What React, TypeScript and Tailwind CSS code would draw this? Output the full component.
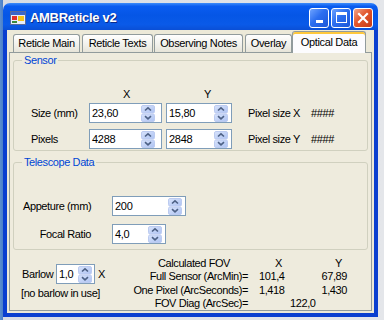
import React from "react";

const font = { fontFamily: '"Liberation Sans", Arial, sans-serif' };

function Spin() {
  return (
    <svg width="14" height="17" viewBox="0 0 14 17" className="shrink-0">
      <defs>
        <linearGradient id="sg" x1="0" y1="0" x2="1" y2="1">
          <stop offset="0" stopColor="#d8e3fb" />
          <stop offset="1" stopColor="#aec3f2" />
        </linearGradient>
      </defs>
      <rect x="0.5" y="0.5" width="13" height="7.5" rx="1.5" fill="url(#sg)" stroke="#bccbf0" />
      <rect x="0.5" y="9" width="13" height="7.5" rx="1.5" fill="url(#sg)" stroke="#bccbf0" />
      <path d="M4 5.5 L7 2.8 L10 5.5" fill="none" stroke="#4d6185" strokeWidth="1.6" />
      <path d="M4 11.2 L7 13.9 L10 11.2" fill="none" stroke="#4d6185" strokeWidth="1.6" />
    </svg>
  );
}

function NumInput({ value, w, mr = 3 }: { value: string; w: number; mr?: number }) {
  return (
    <div
      className="flex h-[20px] items-center justify-between border border-[#7f9db9] bg-white pl-[2px]"
      style={{ width: w, paddingRight: mr }}
    >
      <span className="text-[11px] tracking-[-0.3px] text-black">{value}</span>
      <Spin />
    </div>
  );
}

function Tab({ label, w, ml, selected }: { label: string; w: number; ml: number; selected?: boolean }) {
  return (
    <div
      className={
        selected
          ? "relative z-10 -mb-px flex h-[22px] items-end justify-center rounded-t-[3px] border border-b-0 border-[#919b9c] bg-[#fcfcfe] pb-[3px] shadow-[inset_0_2px_0_#ffc83c]"
          : "flex h-[18px] items-center justify-center rounded-t-[3px] border border-b-0 border-[#919b9c] bg-[linear-gradient(to_bottom,#ffffff,#f0f0ea_60%,#e6e4d8)]"
      }
      style={{ width: w, marginLeft: ml }}
    >
      <span className="text-[11px] tracking-[-0.35px] text-black">{label}</span>
    </div>
  );
}

function TitleButton({ kind }: { kind: "min" | "max" | "close" }) {
  const close = kind === "close";
  return (
    <div
      className={
        "flex h-[20px] w-[20px] items-center justify-center rounded-[3px] border border-white " +
        (close
          ? "bg-[linear-gradient(135deg,#f0a58a,#e2562c_45%,#c63a16)]"
          : "bg-[linear-gradient(135deg,#6ea3ff,#2b6ef0_45%,#1c57d8)]")
      }
    >
      {kind === "min" && <div className="mt-[8px] h-[3px] w-[7px] bg-white" />}
      {kind === "max" && <div className="h-[11px] w-[11px] border-[1px] border-t-[3px] border-white" />}
      {kind === "close" && (
        <svg width="12" height="12" viewBox="0 0 12 12">
          <path d="M2 2 L10 10 M10 2 L2 10" stroke="white" strokeWidth="2.2" strokeLinecap="square" />
        </svg>
      )}
    </div>
  );
}

function AppIcon() {
  return (
    <svg width="16" height="14" viewBox="0 0 16 14">
      <rect x="0.5" y="0.5" width="15" height="13" fill="#e8eefc" stroke="#5a6a9a" />
      <rect x="1" y="1" width="14" height="3" fill="#3a66c8" />
      <rect x="2" y="5" width="5" height="4" fill="#e0302a" />
      <rect x="8" y="5" width="6" height="5" fill="#f5c518" />
      <rect x="2" y="10" width="5" height="2" fill="#3c8a3c" />
    </svg>
  );
}

export default function App() {
  return (
    <div
      className="h-[320px] w-[384px] overflow-hidden bg-[linear-gradient(to_right,#5a8fd0_0px,#4b7fc8_3px,#d8dce4_3px,#e4e6ea_100%)] pl-[3px] pt-[3px]"
      style={font}
    >
      <div className="flex h-[312px] w-[375px] flex-col">
        {/* Title bar */}
        <div className="flex h-[27px] shrink-0 items-center rounded-t-[7px] bg-[linear-gradient(to_bottom,#3d8cfa_0%,#0a5cf0_12%,#0556e6_45%,#0a5ae8_80%,#0a4fd6_100%)] pl-[7px] pr-[5px] pt-[2px]">
          <AppIcon />
          <span className="ml-[4px] text-[13px] font-bold tracking-[-0.3px] text-white [text-shadow:1px_1px_0_#0a2a8a]">
            AMBReticle v2
          </span>
          <div className="ml-auto flex gap-[2px]">
            <TitleButton kind="min" />
            <TitleButton kind="max" />
            <TitleButton kind="close" />
          </div>
        </div>
        {/* Body */}
        <div className="flex flex-1 flex-col border-x-4 border-b-4 border-[#0a3fd0] bg-[#ece9d8] pb-[2px]">
          {/* Tabs */}
          <div className="flex h-[22px] shrink-0 items-end">
            <Tab label="Reticle Main" w={67} ml={6} />
            <Tab label="Reticle Texts" w={71} ml={2} />
            <Tab label="Observing Notes" w={89} ml={1} />
            <Tab label="Overlay" w={47} ml={2} />
            <Tab label="Optical Data" w={74} ml={0} selected />
          </div>
          {/* Panel */}
          <div className="mx-[2px] flex flex-1 flex-col border border-[#919b9c] bg-[#eeebdd] px-[3px] text-[11px] tracking-[-0.4px] text-black">
            {/* Sensor */}
            <fieldset className="mt-[1px] h-[97px] rounded-[3px] border border-[#d0d0bf] px-[8px]">
              <legend className="px-[2px] leading-[13px] text-[#0046d5]">Sensor</legend>
              <div className="mt-[21px] flex h-[12px] items-center leading-[12px]">
                <span className="ml-[101px]">X</span>
                <span className="ml-[74px]">Y</span>
              </div>
              <div className="mt-[3px] flex items-center">
                <span className="ml-[9px] w-[58px]">Size (mm)</span>
                <NumInput value="23,60" w={73} mr={6} />
                <div className="w-[4px]" />
                <NumInput value="15,80" w={66} />
                <span className="ml-[16px] w-[63px]">Pixel size X</span>
                <span>####</span>
              </div>
              <div className="mt-[6px] flex items-center">
                <span className="ml-[9px] w-[58px]">Pixels</span>
                <NumInput value="4288" w={73} mr={6} />
                <div className="w-[4px]" />
                <NumInput value="2848" w={66} />
                <span className="ml-[16px] w-[63px]">Pixel size Y</span>
                <span>####</span>
              </div>
            </fieldset>
            {/* Telescope */}
            <fieldset className="mt-[5px] h-[94px] rounded-[3px] border border-[#d0d0bf] px-[8px]">
              <legend className="px-[2px] leading-[13px] text-[#0046d5]">Telescope Data</legend>
              <div className="mt-[27px] flex items-center">
                <span className="ml-[1px] w-[89px]">Appeture (mm)</span>
                <NumInput value="200" w={74} />
              </div>
              <div className="mt-[8px] flex items-center">
                <span className="w-[69px] text-right">Focal Ratio</span>
                <div className="w-[21px]" />
                <NumInput value="4,0" w={54} />
              </div>
            </fieldset>
            {/* Bottom */}
            <div className="flex">
              <div className="flex w-[118px] flex-col pt-[14px]">
                <div className="flex items-center">
                  <span className="ml-[9px] w-[34px]">Barlow</span>
                  <NumInput value="1,0" w={39} mr={2} />
                  <span className="ml-[3px]">X</span>
                </div>
                <span className="ml-[8px] mt-[3px] leading-[13px]">[no barlow in use]</span>
              </div>
              <div className="flex flex-col pt-[7px] leading-[13.3px]">
                <div className="flex">
                  <span className="w-[117px] pl-[27px]">Calculated FOV</span>
                  <span className="ml-[11px] w-[40px] pl-[16px]">X</span>
                  <span className="w-[48px] pr-[5px] text-right">Y</span>
                </div>
                <div className="flex">
                  <span className="w-[117px] text-right">Full Sensor (ArcMin)=</span>
                  <span className="ml-[11px] w-[40px]">101,4</span>
                  <span className="w-[48px] text-right">67,89</span>
                </div>
                <div className="flex">
                  <span className="w-[117px] text-right">One Pixel (ArcSeconds)=</span>
                  <span className="ml-[11px] w-[40px]">1,418</span>
                  <span className="w-[48px] text-right">1,430</span>
                </div>
                <div className="flex">
                  <span className="w-[117px] text-right">FOV Diag (ArcSec)=</span>
                  <span className="ml-[11px] pl-[31px]">122,0</span>
                </div>
              </div>
            </div>
          </div>
        </div>
      </div>
    </div>
  );
}
